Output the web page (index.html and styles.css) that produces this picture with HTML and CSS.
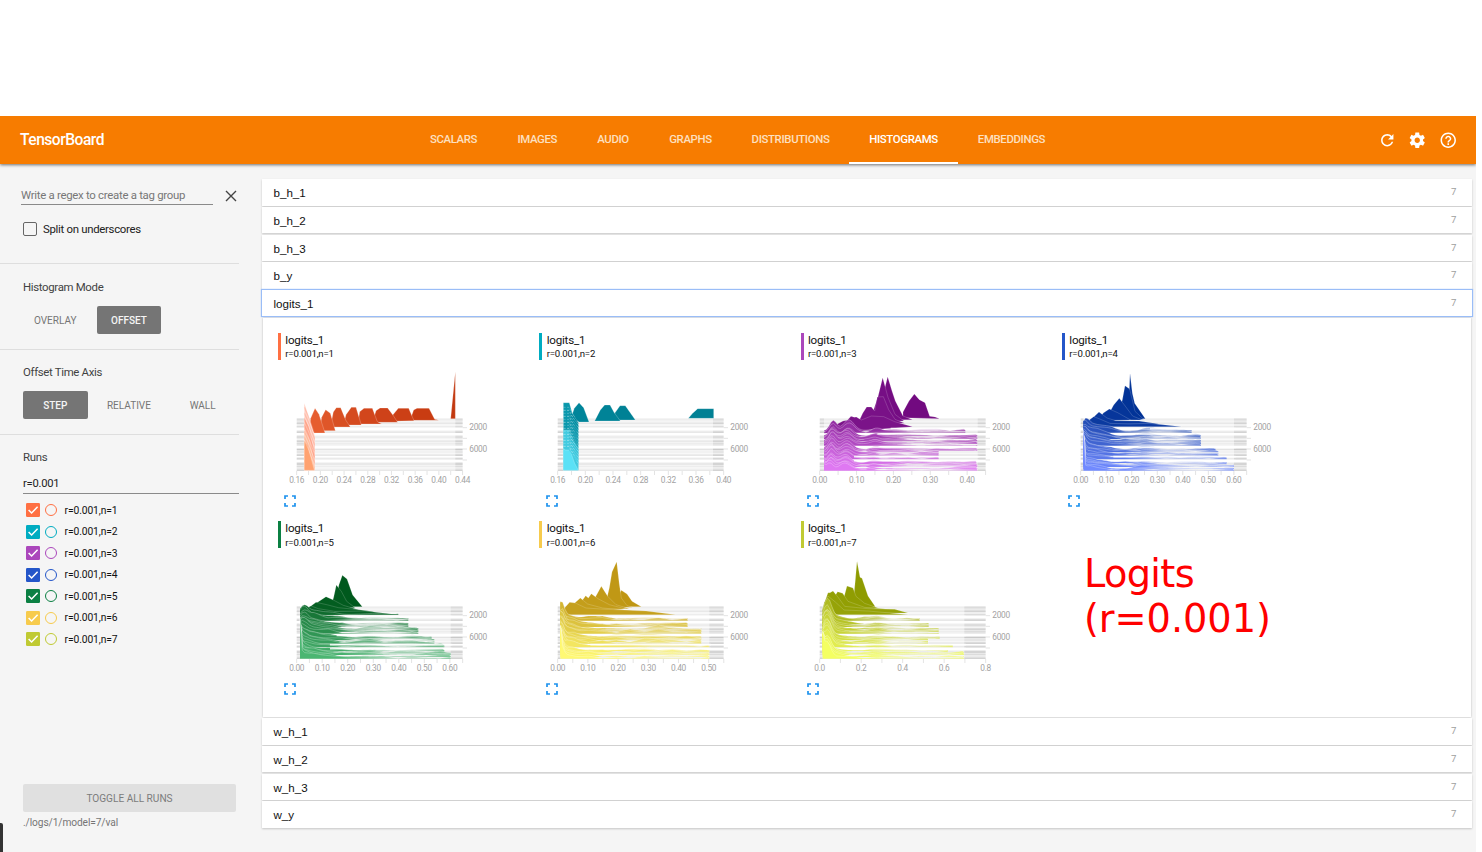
FILE: index.html
```html
<!DOCTYPE html>
<html lang="en">
<head>
<meta charset="utf-8">
<title>TensorBoard</title>
<link rel="stylesheet" href="styles.css">
</head>
<body>
<div class="app">
  <header class="toolbar">
    <div class="brand">TensorBoard</div>
    <nav class="tabs">
      <a class="tab t-scalars">SCALARS</a><a class="tab t-images">IMAGES</a><a class="tab t-audio">AUDIO</a><a class="tab t-graphs">GRAPHS</a><a class="tab t-dist">DISTRIBUTIONS</a><a class="tab t-hist active">HISTOGRAMS</a><a class="tab t-emb">EMBEDDINGS</a>
    </nav>
    <div class="actions">
      <svg viewBox="0 0 24 24"><path d="M17.65 6.35C16.2 4.9 14.21 4 12 4c-4.42 0-7.99 3.58-7.99 8s3.57 8 7.99 8c3.73 0 6.84-2.55 7.73-6h-2.08c-.82 2.33-3.04 4-5.65 4-3.31 0-6-2.69-6-6s2.69-6 6-6c1.66 0 3.14.69 4.22 1.78L13 11h7V4l-2.35 2.35z"/></svg>
      <svg viewBox="0 0 24 24"><path d="M19.43 12.98c.04-.32.07-.64.07-.98s-.03-.66-.07-.98l2.11-1.65c.19-.15.24-.42.12-.64l-2-3.46c-.12-.22-.39-.3-.61-.22l-2.49 1c-.52-.4-1.08-.73-1.69-.98l-.38-2.65C14.46 2.18 14.25 2 14 2h-4c-.25 0-.46.18-.49.42l-.38 2.65c-.61.25-1.17.59-1.69.98l-2.49-1c-.23-.09-.49 0-.61.22l-2 3.46c-.13.22-.07.49.12.64l2.11 1.65c-.04.32-.07.65-.07.98s.03.66.07.98l-2.11 1.65c-.19.15-.24.42-.12.64l2 3.46c.12.22.39.3.61.22l2.49-1c.52.4 1.08.73 1.69.98l.38 2.65c.03.24.24.42.49.42h4c.25 0 .46-.18.49-.42l.38-2.65c.61-.25 1.17-.59 1.69-.98l2.49 1c.23.09.49 0 .61-.22l2-3.46c.12-.22.07-.49-.12-.64l-2.11-1.65zM12 15.5c-1.93 0-3.5-1.57-3.5-3.5s1.57-3.5 3.5-3.5 3.5 1.57 3.5 3.5-1.57 3.5-3.5 3.5z"/></svg>
      <svg viewBox="0 0 24 24"><path d="M11 18h2v-2h-2v2zm1-16C6.48 2 2 6.48 2 12s4.48 10 10 10 10-4.48 10-10S17.52 2 12 2zm0 18c-4.41 0-8-3.59-8-8s3.59-8 8-8 8 3.59 8 8-3.59 8-8 8zm0-14c-2.21 0-4 1.79-4 4h2c0-1.1.9-2 2-2s2 .9 2 2c0 2-3 1.75-3 5h2c0-2.25 3-2.5 3-5 0-2.21-1.79-4-4-4z"/></svg>
    </div>
  </header>
  <div class="body">
    <aside class="sidebar">
      <section class="section regex">
        <div class="regex-row">
          <div class="regex-input">Write a regex to create a tag group</div>
          <svg class="close" viewBox="0 0 12 12"><path d="M1 1L11 11M11 1L1 11"/></svg>
        </div>
        <div class="split"><span class="box"></span>Split on underscores</div>
      </section>
      <section class="section mode">
        <h3>Histogram Mode</h3>
        <div class="buttons"><span class="btn">OVERLAY</span><span class="btn gap on">OFFSET</span></div>
      </section>
      <section class="section axis">
        <h3>Offset Time Axis</h3>
        <div class="buttons"><span class="btn on">STEP</span><span class="btn gap">RELATIVE</span><span class="btn gap">WALL</span></div>
      </section>
      <section class="section runs">
        <h3>Runs</h3>
        <div class="runs-input">r=0.001</div>
        <div class="run-list" id="runs"></div>
      </section>
      <div class="sidebar-foot">
        <div class="toggle">TOGGLE ALL RUNS</div>
        <div class="path">./logs/1/model=7/val</div>
      </div>
      <div class="handle"></div>
    </aside>
    <main class="main">
      <div class="row"><span>b_h_1</span><em>7</em></div>
      <div class="row"><span>b_h_2</span><em>7</em></div>
      <div class="row"><span>b_h_3</span><em>7</em></div>
      <div class="row"><span>b_y</span><em>7</em></div>
      <div class="row focus"><span>logits_1</span><em>7</em></div>
      <div class="panel">
        <div class="cards" id="cards"></div>
      </div>
      <div class="row"><span>w_h_1</span><em>7</em></div>
      <div class="row"><span>w_h_2</span><em>7</em></div>
      <div class="row"><span>w_h_3</span><em>7</em></div>
      <div class="row"><span>w_y</span><em>7</em></div>
    </main>
  </div>
</div>
<script src="charts.js"></script>
</body>
</html>
```
FILE: styles.css
```css
* { box-sizing: border-box; }
body { margin: 0; background: #fff; font-family: Roboto, "Liberation Sans", sans-serif; color: #212121; overflow: hidden; }
.app { width: 1476px; height: 852px; padding-top: 116px; display: flex; flex-direction: column; }
.toolbar { height: 48px; flex: none; background: #f77c00; color: #fff; display: flex; align-items: center; position: relative; z-index: 2; box-shadow: 0 1px 3px rgba(0,0,0,.55); clip-path: inset(0 0 -8px 0); }
.brand { width: 409.5px; padding-left: 20px; font-size: 15.6px; font-weight: 500; letter-spacing: -.5px; }
.tabs { display: flex; height: 48px; flex: 1; }
.tab { display: flex; align-items: center; justify-content: center; font-size: 11.4px; font-weight: 500; letter-spacing: -.36px; color: #fde0c0; border-bottom: 2px solid transparent; padding-bottom: .5px; }
.tab.active { color: #fff; border-color: #fff; }
.t-scalars { width: 88px; } .t-images { width: 79.5px; } .t-audio { width: 72px; } .t-graphs { width: 83px; }
.t-dist { width: 117px; } .t-hist { width: 109px; } .t-emb { width: 107px; }
.actions { display: flex; gap: 12.2px; padding: 0 18.5px .5px 0; }
.actions svg { width: 18.5px; height: 18.5px; fill: #fff; }
.body { flex: 1; display: flex; background: #f5f5f5; min-height: 0; }
.sidebar { width: 262px; display: flex; flex-direction: column; position: relative; }
.section { width: 239px; border-bottom: 1px solid #dedede; padding-left: 23px; }
.section h3 { margin: 0; font-size: 11.4px; font-weight: 400; color: #424242; line-height: 14px; letter-spacing: -.32px; }
.regex { height: 100px; padding: 23px 0 0 21px; }
.regex-row { display: flex; width: 218px; gap: 12.2px; }
.regex-input { flex: none; width: 192px; height: 18px; line-height: 17px; border-bottom: 1px solid #8a8a8a; font-size: 11.4px; letter-spacing: -.28px; color: #777; white-space: nowrap; }
.close { flex: none; width: 12px; height: 12px; margin-top: 3px; fill: none; stroke: #444; stroke-width: 1.4; }
.split { display: flex; align-items: center; gap: 6px; margin: 17px 0 0 2px; font-size: 11.4px; letter-spacing: -.3px; line-height: 15px; }
.box { width: 14px; height: 14px; border: 1.5px solid #666; border-radius: 2px; margin-top: -1px; }
.mode { height: 85.5px; padding-top: 15.5px; }
.axis { height: 85.2px; padding-top: 15.4px; }
.buttons { display: flex; margin-top: 12px; }
.btn { width: 64.5px; height: 28px; line-height: 29.2px; border-radius: 2px; text-align: center; font-size: 10px; color: #757575; }
.btn.gap { margin-left: 9.2px; }
.btn.on { background: #757575; color: #f5f5f5; font-weight: 500; }
.runs { padding-top: 15.2px; border: 0; }
.runs-input { margin-top: 11.3px; height: 19px; line-height: 18px; border-bottom: 1px solid #8a8a8a; font-size: 11.2px; letter-spacing: -.25px; }
.run-list { padding: 5.5px 0 0 3px; }
.run { height: 21.5px; display: flex; align-items: center; font-size: 10.3px; letter-spacing: -.12px; color: #111; }
.run .check { width: 14px; height: 14px; }
.run .ring { width: 12px; height: 12px; border: 1.3px solid; border-radius: 50%; margin: 0 7.2px 0 5.4px; }
.sidebar-foot { margin-top: auto; padding: 0 0 22px 23px; }
.toggle { width: 213px; height: 28px; line-height: 29px; background: #e0e0e0; color: #7c7c7c; border-radius: 2px; text-align: center; font-size: 10.1px; }
.path { margin-top: 4.5px; font-size: 10.2px; line-height: 14px; color: #757575; letter-spacing: -.1px; }
.handle { position: absolute; left: 0; bottom: 0; width: 3px; height: 29px; background: #333; border-radius: 0 2px 0 0; }
.main { flex: 1; padding: 15.3px 4px 0 0; }
.row { height: 26.4px; margin-bottom: 1.3px; background: #fff; box-shadow: 0 1px 2px rgba(0,0,0,.2); display: flex; justify-content: space-between; padding: 0 15.5px 0 11.5px; }
.row span { font: 11.6px/27.2px "Liberation Sans", Arial, sans-serif; color: #111; }
.row em { font-style: normal; font-size: 9.6px; line-height: 25px; color: #9e9e9e; }
.row.focus { box-shadow: 0 0 0 1px #9abdf7, 0 0 1px 1px #9abdf7; position: relative; z-index: 1; }
.panel { height: 399px; margin: 0 1px 1.4px 1px; background: #fff; box-shadow: 0 0 2px rgba(0,0,0,.25); padding: 15px 0 0 15px; }
.cards { display: grid; grid-template-columns: repeat(4, 261.33px); grid-auto-rows: 188.3px; }
.card-head { border-left: 3px solid; height: 27px; padding-left: 4.3px; }
.card-title { color: #111; font-size: 11.6px; line-height: 14.5px; letter-spacing: -.2px; }
.card-run { color: #111; font-size: 9.6px; line-height: 13.4px; letter-spacing: -.18px; }
.chart { display: block; width: 230px; height: 130px; }
.chart text { font-family: Roboto, sans-serif; font-size: 25px; letter-spacing: -.9px; fill: #a2a2a2; }
.expand { display: block; width: 12px; height: 12px; margin: 5px 0 0 6.3px; fill: none; stroke: #1e93ee; stroke-width: 1.7; }
.annotation { padding: 30px 0 0 21.9px; font: 38.3px/45px "DejaVu Sans", Verdana, sans-serif; color: #f00; letter-spacing: -.03px; }
.annotation span { display: block; letter-spacing: -.65px; }
```
FILE: charts.js
```js
// Offset-mode histograms: slices are painted from the back (oldest) to the front.
const LEFT = 95, RIGHT = 593;
const SLICES = [296, 300, 305, 310, 315, 320, 333, 337, 348, 352, 356, 363, 367, 371, 376, 388, 391, 396, 402, 406, 414, 417, 428, 432, 436, 440, 446, 451];

const charts = [
  { run: 1, color: '#ff7043', dark: '#c53a12', light: '#ffa270', lo: 118, hi: 571, ticks: ['0.16', '0.20', '0.24', '0.28', '0.32', '0.36', '0.40', '0.44'], step: 71.1,
    shapes: [
      ['#c2380f', '557,296 571,155 571,296'],
      ['#c93c12', '435,301 446,270 456,265 492,265 509,298 522,301'],
      ['#cc4016', '374,304 385,283 400,265 431,265 447,302'],
      ['#ce4219', '322,307 333,272 345,264 368,264 383,284 398,307'],
      ['#d2461c', '279,312 284,275 297,265 322,265 337,305 350,312'],
      ['#d54b20', '235,315 243,284 259,262 273,262 289,315'],
      ['#d85023', '196,321 205,276 214,263 227,263 242,300 256,321'],
      ['#df5629', '163,332 170,292 182,269 196,280 211,332'],
      ['#e65d2f', '132,325 137,295 150,265 162,283 180,339 148,339'],
      ['#ffc8b8', '118,451 118,250 132,292 150,350 150,378 150,451'],
      ['#ffaa90', '118,451 118,290 132,320 149,400 149,451'],
      ['#ffc3a4', '118,451 118,330 134,362 149,435 149,451'],
      ['#ffa270', '118,451 118,360 128,376 148,451']
    ], streaks: [118, 149, 262, 370] },
  { run: 2, color: '#00acc1', dark: '#008196', light: '#59dff4', lo: 111, hi: 561, ticks: ['0.16', '0.20', '0.24', '0.28', '0.32', '0.36', '0.40'], step: 83,
    shapes: [
      ['#008094', '487,295 500,280 515,266 563,266 563,295'],
      ['#008195', '258,300 268,277 282,257 298,257 317,284 328,300'],
      ['#008397', '206,303 223,270 236,255 252,255 264,277 283,303'],
      ['#00859a', '136,290 145,265 159,248 173,263 189,306 159,306'],
      ['#0a98ac', '112,451 112,248 130,248 138,277 157,312 157,451'],
      ['#42cbe0', '112,451 112,330 130,330 142,360 157,388 157,451'],
      ['#5be1f6', '112,451 112,386 119,390 132,390 146,430 157,451']
    ], streaks: [112, 157, 262, 385] },
  { run: 3, color: '#ab47bc', dark: '#720a80', light: '#df78f2', lo: 108, hi: 569, ticks: ['0.00', '0.10', '0.20', '0.30', '0.40'], step: 110.6,
    peaks: ['345,293 345,276 363,243 379,222 394,239 411,248 425,289 441,291 455,296', '262,300 284,230 299,170 312,213 322,243 345,288 374,299', '245,305 270,230 284,173 300,232 321,283 348,303', '210,310 224,280 236,261 250,261 260,273 268,231 286,230 302,269 321,298 350,310', '108,340 130,322 165,303 178,301 189,289 199,292 205,291 220,300 250,288 287,290 320,305 374,320'],
    bumps: [[140, 15, 30], [186, 22, 30], [268, 16, 8], [330, 28, 3]], from: 6, drift: -16, left: 20, tail: 8, fade: 0.7,
    ends: [450, 532, 568, 568, 568, 452, 452, 565, 568] },
  { run: 4, color: '#2456c9', dark: '#003195', light: '#718aff', lo: 103, hi: 555, ticks: ['0.00', '0.10', '0.20', '0.30', '0.40', '0.50', '0.60'], step: 76.6,
    peaks: ['226,296 240,231 243,160 250,220 257,250 289,296', '203,297 220,240 228,197 242,207 258,274 284,298', '170,299 194,255 211,235 230,260 251,288 280,300', '145,302 163,279 181,267 206,278 245,300', '110,313 135,290 150,276 174,294 200,302 270,303 330,312', '106,320 118,302 134,290 150,296 183,310 240,312 300,310 398,320'],
    bumps: [[113, 14, 34], [140, 30, 18], [180, 24, 7], [300, 26, 8]], from: 6, drift: -22, left: 125, tail: 7, fade: 0.45,
    ends: [400, 428, 455, 456, 500, 508, 533, 533, 555] },
  { run: 5, color: '#0b8043', dark: '#00591d', light: '#4bb672', lo: 105, hi: 557, ticks: ['0.00', '0.10', '0.20', '0.30', '0.40', '0.50', '0.60'], step: 76.6,
    peaks: ['207,296 222,230 232,202 246,213 263,261 292,296', '197,299 206,268 214,231 229,250 245,280 270,299', '130,304 150,288 183,266 205,276 235,292 280,305', '110,311 138,294 153,283 185,290 220,299 270,304 330,311', '105,320 120,302 139,294 160,302 210,310 300,309 398,320'],
    bumps: [[119, 16, 32], [148, 30, 17], [200, 32, 6], [330, 40, 4]], from: 5, drift: -18, left: 125, tail: 8, fade: 0.55,
    ends: [400, 430, 430, 460, 500, 508, 538, 538, 557] },
  { run: 6, color: '#f7cb4d', dark: '#bf9613', light: '#fff973', lo: 103, hi: 550, ticks: ['0.00', '0.10', '0.20', '0.30', '0.40', '0.50'], step: 90.6,
    peaks: ['260,296 286,247 303,258 318,280 346,296', '236,298 250,240 258,192 272,161 280,229 286,270 303,293 320,298', '190,300 212,260 226,235 246,266 270,290 310,302', '150,303 179,263 187,270 196,257 216,272 250,290 300,303', '120,308 163,270 185,288 230,300 320,308', '104,320 118,297 131,283 148,285 180,300 240,304 360,309 450,320'],
    bumps: [[107, 13, 50], [135, 24, 14], [190, 28, 4], [390, 45, 4]], from: 6, drift: -5, left: 100, tail: 10, fade: 0.75,
    ends: [450, 485, 485, 526, 526, 526, 550, 550, 550] },
  { run: 7, color: '#c0ca33', dark: '#8e9b00', light: '#f4ff62', lo: 104, hi: 529, ticks: ['0.0', '0.2', '0.4', '0.6', '0.8'], step: 124.5,
    peaks: ['194,296 201,227 207,160 216,208 222,211 240,264 262,296', '155,300 170,260 177,234 195,240 204,265 230,286 270,300', '130,304 140,265 149,251 164,256 180,280 230,298 300,304', '104,315 104,300 120,254 126,254 135,249 149,266 170,295 240,302 320,304 360,315', '104,320 108,285 120,264 142,282 168,306 240,309 362,320'],
    bumps: [[119, 17, 62], [150, 26, 9], [270, 24, 5]], from: 6, drift: -4, left: 80, tail: 7, fade: 0.65,
    ends: [362, 395, 422, 452, 455, 420, 495, 480, 528] }
];

function rgb(hex) { return [1, 3, 5].map(i => parseInt(hex.slice(i, i + 2), 16)); }
function mix(a, b, t) { const x = rgb(a), y = rgb(b); return 'rgb(' + x.map((v, i) => Math.round(v + (y[i] - v) * t)).join() + ')'; }
function random(seed) { return () => { seed = (seed * 16807) % 2147483647; return seed / 2147483647; }; }

function grid(c) {
  let s = '';
  SLICES.forEach((y, i) => {
    const shade = [0.045, 0.07, 0.04, 0.09][i % 4];
    s += `<path d="M${LEFT} ${y}H${RIGHT}" stroke="#000" stroke-opacity="${shade}" stroke-width="4.5"/>`;
    s += `<path d="M${LEFT} ${y}H${c.lo}M${c.hi} ${y}H${RIGHT}" stroke="#000" stroke-opacity="${shade}" stroke-width="4.5"/>`;
  });
  return s;
}

function slices(c) {
  const rnd = random(c.run * 7919 + 17);
  let s = '';
  c.peaks.forEach((p, i) => { s += `<polygon points="${p}" fill="${mix(c.dark, c.light, i * 0.02)}" stroke="#fff" stroke-opacity=".4" stroke-width="1.3"/>`; });
  const groups = [0, 0, 0, 0, 0, 0, 1, 1, 2, 2, 2, 3, 3, 3, 3, 4, 4, 5, 5, 5, 6, 6, 7, 7, 8, 8, 8, 8];
  for (let i = c.from; i < SLICES.length; i++) {
    const y = SLICES[i], t = (y - 296) / 155, end = c.ends[groups[i]], id = `g${c.run}-${i}`;
    const color = mix(c.dark, c.light, Math.pow(t, 0.85));
    let top = '', a = rnd(), b = rnd(), n = 0;
    const amp = c.bumps.map(() => 0.75 + rnd() * 0.4), shift = (rnd() - 0.5) * 5;
    for (let x = c.lo; x < end; x += 7, n++) {
      if (n % 6 === 0) { a = b; b = rnd() ** 1.6; }
      const noise = a + (b - a) * (n % 6) / 6;
      let h = noise * c.tail * (x > c.lo + 20 ? 1 : 0.3);
      c.bumps.forEach((p, k) => { h += amp[k] * p[2] * (k ? 1 - t * 0.4 : 1 - t * 0.2) * Math.exp(-(((x - p[0] - shift - c.drift * t) / p[1]) ** 2)); });
      if (n === 0) h = Math.max(h, c.left * t * t);
      top += `${x},${(y - h).toFixed(1)} `;
    }
    // Sparse bins toward the right read as thinner, paler bands.
    const mid = (c.fade * (0.7 + rnd() * 0.5)).toFixed(2), dip = (c.fade * (0.25 + rnd() * 0.7)).toFixed(2);
    s += `<linearGradient id="${id}" gradientUnits="userSpaceOnUse" x1="${c.lo}" x2="${end}" y1="0" y2="0"><stop offset=".28" stop-color="${color}"/><stop offset=".48" stop-color="${color}" stop-opacity="${mid}"/><stop offset=".62" stop-color="${color}" stop-opacity="${dip}"/><stop offset=".8" stop-color="${color}" stop-opacity="${dip}"/><stop offset="1" stop-color="${color}" stop-opacity=".75"/></linearGradient>`;
    s += `<polygon points="${c.lo},${y + 1} ${top}${end},${y - 2} ${end},${y + 1}" fill="url(#${id})"/>`;
    s += `<polyline points="${top}${end},${y - 2}" fill="none" stroke="#fff" stroke-opacity=".5" stroke-width="1.5"/>`;
  }
  // Gaps in step time between groups of slices.
  [[326, 200], [342, 160], [382, 110], [410, 90], [422, 90]].forEach(([y, dx]) => { s += `<path d="M${c.lo + dx} ${y}H${c.hi + 5}" stroke="#fff" stroke-width="5" stroke-opacity=".8"/>`; });
  return s;
}

// Charts whose values fall into a few separate humps.
function sparse(c) {
  let s = '';
  c.shapes.forEach(([f, p]) => { s += `<polygon points="${p}" fill="${f}" stroke="#fff" stroke-opacity=".55" stroke-width="1.2"/>`; });
  const [a, b, y0, y1] = c.streaks;
  for (let y = y0, i = 0; y < y1; y += 9, i++) {
    if (c.run === 1) {
      s += `<path d="M${a} ${y}L${a + 12} ${y + 26}L${b} ${y + 78}" fill="none" stroke="${i % 2 ? '#fff' : '#ff8f78'}" stroke-opacity=".45" stroke-width="1.6"/>`;
    } else {
      s += `<path d="M${a} ${y}H${a + 17}L${b} ${y + 52}" fill="none" stroke="#fff" stroke-opacity="${i % 2 ? 0.6 : 0.35}" stroke-dasharray="7 4" stroke-width="2"/>`;
      s += `<path d="M${a + 17} ${y + 10}L${b} ${y + 48}" stroke="${mix(c.dark, c.light, (y - y0) / 140)}" stroke-width="3"/>`;
    }
  }
  return s;
}

function chart(c) {
  let axis = '';
  c.ticks.forEach((t, i) => { axis += `<text x="${LEFT + i * c.step}" y="490" text-anchor="middle">${t}</text>`; });
  for (let x = LEFT; x <= RIGHT + 1; x += c.step / 2) axis += `<path d="M${x} 453V465" stroke="#ddd" stroke-width="2.5"/>`;
  [323, 355, 387, 420].forEach(y => { axis += `<path d="M${RIGHT} ${y}H606" stroke="#ddd" stroke-width="2.5"/>`; });
  axis += '<text x="613" y="331">2000</text><text x="613" y="395">6000</text>';
  return `<svg class="chart" viewBox="39 120 690 390">${grid(c)}${c.peaks ? slices(c) : sparse(c)}${axis}</svg>`;
}

document.getElementById('cards').innerHTML = charts.map(c => `<div class="card">
  <div class="card-head" style="border-color:${c.color}"><div class="card-title">logits_1</div><div class="card-run">r=0.001,n=${c.run}</div></div>
  ${chart(c)}
  <svg class="expand" viewBox="0 0 12 12"><path d="M1 4V1H4M8 1H11V4M11 8V11H8M4 11H1V8"/></svg>
</div>`).join('') + '<div class="annotation"><span>Logits</span>(r=0.001)</div>';

document.getElementById('runs').innerHTML = charts.map(c => `<div class="run">
  <svg class="check" viewBox="0 0 14 14"><rect width="14" height="14" rx="1.3" fill="${c.color}"/><path d="M2.6 7L5.6 10L11.6 3.8" fill="none" stroke="#fff" stroke-width="1.5"/></svg>
  <span class="ring" style="border-color:${c.color}"></span>r=0.001,n=${c.run}</div>`).join('');
```
